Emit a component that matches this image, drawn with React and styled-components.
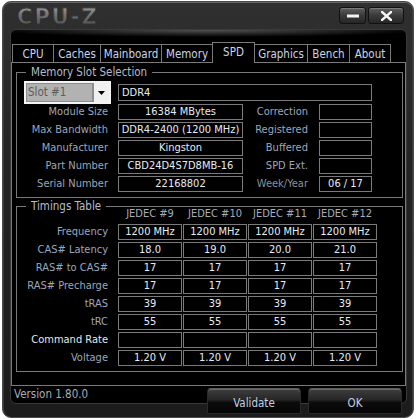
import React from 'react';
import styled, { createGlobalStyle, css } from 'styled-components';

const GlobalStyle = createGlobalStyle`
  html, body {
    margin: 0;
    padding: 0;
    background: #ffffff;
  }
  body {
    font-family: "DejaVu Sans Condensed", "Liberation Sans", Arial, sans-serif;
    font-stretch: condensed;
    font-size: 11px;
  }
`;

const Window = styled.div`
  width: 412px;
  height: 417px;
  margin: 1px 0 0 2px;
  box-sizing: border-box;
  border: 1px solid #4a4a4a;
  border-radius: 9px;
  background: linear-gradient(#303030, #232323 40%, #1c1c1c);
  box-shadow: inset 0 1px 0 #666, inset 1px 0 0 #3a3a3a, inset -1px 0 0 #3a3a3a;
  display: flex;
  flex-direction: column;
  overflow: hidden;
`;

const TitleBar = styled.div`
  height: 27px;
  display: flex;
  align-items: flex-start;
  justify-content: space-between;
  padding: 0 9px 0 14px;
  box-sizing: border-box;
`;

const Logo = styled.div`
  margin-top: 4px;
  font-family: "DejaVu Sans", sans-serif;
  font-stretch: normal;
  font-weight: bold;
  font-size: 21px;
  line-height: 22px;
  letter-spacing: 2px;
  background: linear-gradient(#9a9a9a, #6a6a6a 50%, #4a4a4a);
  -webkit-background-clip: text;
  background-clip: text;
  color: transparent;
  -webkit-text-stroke: 0.6px #141414;
`;

const Controls = styled.div`
  display: flex;
  gap: 2px;
  margin-top: 5px;
`;

const CtrlButton = styled.div`
  width: ${p => p.$w}px;
  height: 17px;
  box-sizing: border-box;
  border: 1px solid #111;
  border-radius: 3px;
  background: linear-gradient(#5e5e5e, #3a3a3a 50%, #262626);
  box-shadow: inset 0 1px 0 #7a7a7a;
  display: flex;
  align-items: center;
  justify-content: center;
`;

const Panel = styled.div`
  margin: 0 6px 0 7px;
  border: 1px solid #3a3a3a;
  border-radius: 6px;
  background:
    radial-gradient(ellipse 55% 7px at 50% 0, rgba(150, 150, 150, 0.55), rgba(0, 0, 0, 0)),
    #000;
  padding-top: 12px;
  display: flex;
  flex-direction: column;
`;

const TabRow = styled.div`
  height: 20px;
  display: flex;
  align-items: flex-end;
  padding-left: 2px;
`;

const Tab = styled.div`
  width: ${p => p.$w}px;
  height: 18px;
  box-sizing: border-box;
  border: 1px solid #7a7a7a;
  border-bottom: none;
  margin-left: -1px;
  background: #000;
  color: #c8d4ea;
  font-size: 11.5px;
  display: flex;
  align-items: center;
  justify-content: center;
  ${p => p.$active && css`
    height: 21px;
    margin-bottom: -1px;
    position: relative;
    z-index: 1;
    padding-bottom: 2px;
  `}
`;

const Page = styled.div`
  border: 1px solid #7a7a7a;
  padding: 3px 2px 13px 4px;
  display: flex;
  flex-direction: column;
  gap: 2px;
`;

const Group = styled.fieldset`
  margin: 0;
  padding: ${p => p.$top}px 8px 5px 0;
  border: 1px solid #7a7a7a;
  min-width: 0;
`;

const Legend = styled.legend`
  margin-left: 9px;
  padding: 0 5px;
  font-size: 11.5px;
  line-height: 12px;
  color: #b4bccc;
`;

const SpdGrid = styled.div`
  display: grid;
  grid-template-columns: 100px 125px 74px 53px;
  grid-template-rows: 20px repeat(5, 16px);
  column-gap: 1px;
  row-gap: 2px;
`;

const SlotSelect = styled.div`
  margin-left: 7px;
  width: 87px;
  height: 23px;
  margin-top: -1px;
  box-sizing: border-box;
  border: 2px solid #f4f4f4;
  background: #b2b2b2;
  display: flex;
  align-items: stretch;
`;

const SlotText = styled.div`
  flex: 1;
  color: #5c5c5c;
  font-size: 11.5px;
  line-height: 17px;
  padding-left: 1px;
  border: 1px solid #8c8c8c;
`;

const SlotArrow = styled.div`
  width: 15px;
  background: #f0f0f0;
  border-left: 1px solid #8c8c8c;
  display: flex;
  align-items: center;
  justify-content: center;
`;

const Label = styled.div`
  text-align: right;
  padding-right: ${p => p.$pad || 9}px;
  font-size: 11px;
  line-height: 16px;
  color: ${p => p.$color || '#9ca7bc'};
  white-space: nowrap;
`;

const Field = styled.div`
  height: 16px;
  box-sizing: border-box;
  border: 1px solid #7a7a7a;
  background: #000;
  color: #e4ecf6;
  font-size: 11px;
  line-height: 14px;
  text-align: ${p => p.$align || 'center'};
  padding-left: ${p => (p.$align === 'left' ? 3 : 0)}px;
  white-space: nowrap;
  overflow: hidden;
`;

const TypeField = styled(Field)`
  grid-column: 2 / span 3;
  height: 17px;
  align-self: center;
  line-height: 15px;
`;

const TimingGrid = styled.div`
  display: grid;
  grid-template-columns: 100px repeat(4, 64px);
  grid-template-rows: 12px repeat(8, 16px);
  column-gap: 1px;
  row-gap: 2px;
  margin-top: -2px;
`;

const ColHead = styled.div`
  text-align: center;
  color: #a6adb8;
  font-size: 11px;
  line-height: 12px;
  margin-top: -2px;
  white-space: nowrap;
`;

const Footer = styled.div`
  height: 17px;
  padding-left: 3px;
  color: #a4adbe;
  font-size: 11.5px;
  line-height: 17px;
`;

const ButtonRow = styled.div`
  display: flex;
  justify-content: flex-end;
  gap: 7px;
  padding-right: 11px;
  margin-top: -16px;
`;

const Button = styled.div`
  width: 94px;
  height: 26px;
  box-sizing: border-box;
  border: 1px solid #2a2a2a;
  border-top-color: #5a5a5a;
  border-radius: 4px 4px 2px 2px;
  background: linear-gradient(#3e3e3e, #262626 45%, #0c0c0c 55%, #050505);
  box-shadow: inset 0 1px 0 #6a6a6a;
  color: #c4cfe2;
  font-size: 11.5px;
  display: flex;
  align-items: center;
  justify-content: center;
  padding-top: 3px;
`;

const tabs = [
  ['CPU', 42], ['Caches', 48], ['Mainboard', 62], ['Memory', 52],
  ['SPD', 43], ['Graphics', 54], ['Bench', 43], ['About', 42],
];

const spdRows = [
  ['Module Size', '16384 MBytes', 'Correction', ''],
  ['Max Bandwidth', 'DDR4-2400 (1200 MHz)', 'Registered', ''],
  ['Manufacturer', 'Kingston', 'Buffered', ''],
  ['Part Number', 'CBD24D4S7D8MB-16', 'SPD Ext.', ''],
  ['Serial Number', '22168802', 'Week/Year', '06 / 17'],
];

const timings = [
  ['Frequency', ['1200 MHz', '1200 MHz', '1200 MHz', '1200 MHz']],
  ['CAS# Latency', ['18.0', '19.0', '20.0', '21.0']],
  ['RAS# to CAS#', ['17', '17', '17', '17']],
  ['RAS# Precharge', ['17', '17', '17', '17']],
  ['tRAS', ['39', '39', '39', '39']],
  ['tRC', ['55', '55', '55', '55']],
  ['Command Rate', ['', '', '', '']],
  ['Voltage', ['1.20 V', '1.20 V', '1.20 V', '1.20 V']],
];

const MinIcon = () => (
  <svg width="12" height="4" viewBox="0 0 12 4">
    <rect x="0" y="0.5" width="12" height="3" fill="#f2f2f2" />
  </svg>
);

const CloseIcon = () => (
  <svg width="11" height="10" viewBox="0 0 11 10">
    <path d="M1 1 L10 9 M10 1 L1 9" stroke="#f4f4f4" strokeWidth="2.4" strokeLinecap="square" />
  </svg>
);

const DownArrow = () => (
  <svg width="7" height="4" viewBox="0 0 7 4">
    <path d="M0 0 H7 L3.5 4 Z" fill="#000" />
  </svg>
);

const App = () => (
  <>
    <GlobalStyle />
    <Window>
      <TitleBar>
        <Logo>CPU-Z</Logo>
        <Controls>
          <CtrlButton $w={27}><MinIcon /></CtrlButton>
          <CtrlButton $w={36}><CloseIcon /></CtrlButton>
        </Controls>
      </TitleBar>
      <Panel>
        <TabRow>
          {tabs.map(([name, w]) => (
            <Tab key={name} $w={w} $active={name === 'SPD'}>{name}</Tab>
          ))}
        </TabRow>
        <Page>
          <Group $top={4}>
            <Legend>Memory Slot Selection</Legend>
            <SpdGrid>
              <SlotSelect>
                <SlotText>Slot #1</SlotText>
                <SlotArrow><DownArrow /></SlotArrow>
              </SlotSelect>
              <TypeField $align="left">DDR4</TypeField>
              {spdRows.map(([label, value, label2, value2]) => (
                <React.Fragment key={label}>
                  <Label>{label}</Label>
                  <Field>{value}</Field>
                  <Label $pad={10} $color={label2 === 'Week/Year' ? '#8a9098' : undefined}>{label2}</Label>
                  <Field>{value2}</Field>
                </React.Fragment>
              ))}
            </SpdGrid>
          </Group>
          <Group $top={0}>
            <Legend>Timings Table</Legend>
            <TimingGrid>
              <div />
              {['#9', '#10', '#11', '#12'].map(n => (
                <ColHead key={n}>JEDEC {n}</ColHead>
              ))}
              {timings.map(([label, values]) => (
                <React.Fragment key={label}>
                  <Label $color={label === 'Command Rate' ? '#e2e8f2' : undefined}>{label}</Label>
                  {values.map((v, i) => <Field key={i}>{v}</Field>)}
                </React.Fragment>
              ))}
            </TimingGrid>
          </Group>
        </Page>
        <Footer>Version 1.80.0</Footer>
      </Panel>
      <ButtonRow>
        <Button>Validate</Button>
        <Button>OK</Button>
      </ButtonRow>
    </Window>
  </>
);

export default App;
